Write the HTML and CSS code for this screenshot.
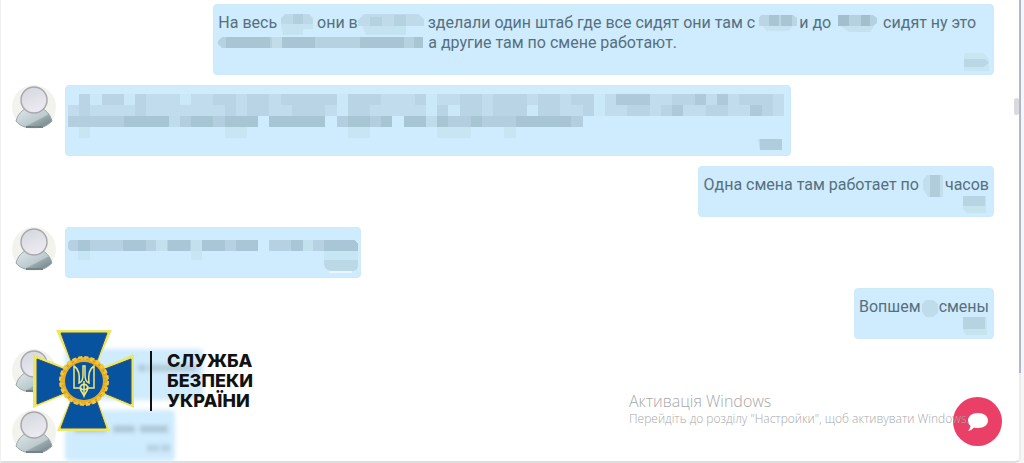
FILE: index.html
```
<!DOCTYPE html>
<html lang="uk">
<head>
    <meta charset="UTF-8">
    <meta name="viewport" content="width=device-width, initial-scale=1">
    <title>Чат</title>
    <link rel="stylesheet" href="styles.css">
</head>
<body>
<!-- shared drawings -->
<svg class="defs" aria-hidden="true">
    <defs>
        <linearGradient id="head" x1="0" y1="0" x2="0.4" y2="1">
            <stop offset="0" stop-color="#d3d6de"/>
            <stop offset="1" stop-color="#eceaf0"/>
        </linearGradient>
        <linearGradient id="body" x1="0" y1="0" x2="1" y2="1">
            <stop offset="0" stop-color="#dfe9ea"/>
            <stop offset="0.6" stop-color="#bccace"/>
            <stop offset="0.64" stop-color="#98a8ad"/>
            <stop offset="1" stop-color="#6f8086"/>
        </linearGradient>
        <symbol id="user" viewBox="0 0 44 44">
            <circle cx="22" cy="22" r="22" fill="#f3f3ee"/>
            <path d="M4 36C6 29 10 25 15 23H29C34 25 38 29 40 36C37 39 34 41 31 42H13C10 41 6 39 4 36Z" fill="url(#body)" stroke="#9aa6aa"/>
            <path d="M14 42H31" stroke="#74838a" stroke-width="2"/>
            <circle cx="22" cy="15" r="13" fill="url(#head)" stroke="#aaa8ae" stroke-width="1.5"/>
        </symbol>
    </defs>
</svg>

<main class="chat">
    <div class="messages">
        <div class="message message--out">
            <div class="bubble">
                <p>На весь <svg class="hidden-text" width="32" height="22" viewBox="0 0 32 22"><path fill="#bdd9e8" d="M4 1H28L32 5V11H0V5Z"/><path fill="#c5e2f1" d="M0 11H32V16H22V22H2Z"/><path fill="#b2cfde" d="M12 1H22V11H12Z"/></svg> они в<svg class="hidden-text" width="66" height="22" viewBox="0 0 66 22"><path fill="#bfdbe9" d="M6 1H60L66 6V13H0V7Z"/><path fill="#b5d2e1" d="M12 4H24V13H12ZM36 2H48V13H36Z"/><path fill="#c5e2f1" d="M4 13H48V22H8Z"/></svg> зделали один штаб где все сидят они там с<svg class="hidden-text" width="44" height="22" viewBox="0 0 44 22"><path fill="#bad5e4" d="M6 2H38L42 5V13H4V5Z"/><path fill="#a9c4d3" d="M14 2H24V13H14ZM26 2H37V13H26Z"/><path fill="#c7e3f2" d="M8 13H38L34 18H12Z"/></svg>и до <svg class="hidden-text" width="44" height="22" viewBox="0 0 44 22"><path fill="#b5d0df" d="M6 2H38L42 5V10L38 13H3V5Z"/><path fill="#a3bfce" d="M3 2H14V13H3ZM26 2H35V13H26Z"/><path fill="#c5e1f0" d="M6 13H39L35 19H14Z"/></svg> сидят ну это <svg class="hidden-text" width="206" height="16" viewBox="0 0 206 16"><path fill="#b6d1df" d="M4 1H205V12H4L0 8V5Z"/><path fill="#a9c4d2" d="M8 1H52V12H8ZM64 1H97V12H64ZM142 1H186V12H142ZM196 1H205V12H196Z"/><path fill="#c2dcea" d="M54 1H64V12H54Z"/></svg> а другие там по смене работают.</p>
                <div class="time"><svg width="26" height="18" viewBox="0 0 26 18"><path fill="#c8e5f2" d="M2 0H20L26 6V18H1V3Z"/><path fill="#b9d7e5" d="M1 6H22L26 10L20 14H1Z"/></svg></div>
            </div>
        </div>

        <div class="message">
            <svg class="avatar" role="img" aria-label="Користувач"><use href="#user"/></svg>
            <div class="bubble bubble--mosaic bubble--wide">
                <svg class="mosaic" width="716" height="44" viewBox="0 0 64 4" preserveAspectRatio="none" shape-rendering="crispEdges">
                    <path fill="#c1dded" d="M1 0H64V2H0V1H1Z"/>
                    <path fill="#cae8f7" d="M2 0H3V1H2ZM5 0H6V1H5ZM24 0H25V2H24ZM41 1H42V2H41ZM32 0H33V2H32ZM47 0H48V2H47ZM34 1H35V2H34ZM10 0H11V1H10Z"/>
                    <path fill="#b9d5e5" d="M1 0H2V2H1ZM3 0H5V1H3ZM6 0H7V2H6ZM13 0H15V1H13ZM14 1H15V2H14ZM16 0H18V2H16ZM19 0H24V1H19ZM20 1H23V2H20ZM25 0H28V1H25ZM25 1H27V2H25ZM31 0H32V1H31ZM33 1H34V2H33ZM35 0H37V2H35ZM38 0H41V2H38ZM42 0H44V2H42ZM45 0H46V1H45ZM46 0H47V2H46ZM50 1H52V2H50ZM54 0H56V1H54ZM53 1H54V2H53ZM57 1H59V2H57ZM60 0H63V1H60ZM62 1H63V2H62Z"/>
                    <path fill="#aecada" d="M49 0H52V1H49ZM56 0H57V1H56ZM58 0H59V1H58ZM54 1H55V2H54ZM61 1H62V2H61Z"/>
                    <path fill="#b3cfdf" d="M0 2H17V3H0ZM18 2H23V3H18ZM24 2H29V3H24ZM30 2H46V3H30Z"/>
                    <path fill="#a8c5d4" d="M5 2H9V3H5ZM11 2H13V3H11ZM14 2H17V3H14ZM18 2H23V3H18ZM25 2H27V3H25ZM28 2H29V3H28ZM30 2H32V3H30ZM33 2H34V3H33ZM36 2H37V3H36ZM40 2H45V3H40Z"/>
                    <path fill="#bfdceb" d="M9 2H10V3H9ZM32 2H33V3H32Z"/>
                    <path fill="#c8e5f4" d="M1 3H2V4H1ZM14 3H16V4H14ZM25 3H27V4H25ZM33 3H36V4H33ZM39 3H40V4H39Z"/>
                </svg>
                <div class="time"><svg width="26" height="18" viewBox="0 0 26 18"><path fill="#c0dceb" d="M0 5H22V16H2Z"/><path fill="#b0cddd" d="M2 5H24V16H2Z"/></svg></div>
            </div>
        </div>

        <div class="message message--out">
            <div class="bubble">
                <p>Одна смена там работает по <svg class="hidden-text" width="22" height="22" viewBox="0 0 22 22"><path fill="#c3dfee" d="M4 0H20V22H5L0 14V5Z"/><path fill="#b1cddc" d="M7 0H17V22H7Z"/></svg>часов</p>
                <div class="time"><svg width="26" height="18" viewBox="0 0 26 18"><path fill="#c7e3f0" d="M0 1H23V18H4L0 14Z"/><path fill="#b7d4e2" d="M0 1H22V11H0Z"/></svg></div>
            </div>
        </div>

        <div class="message">
            <svg class="avatar" role="img" aria-label="Користувач"><use href="#user"/></svg>
            <div class="bubble bubble--mosaic">
                <svg class="mosaic" width="290" height="24" viewBox="0 0 290 24" shape-rendering="crispEdges">
                    <path fill="#b6d2e2" d="M2 4H190V15H2L0 12V7ZM201 4H286L290 8V15H201Z"/>
                    <path fill="#a9c6d6" d="M10 4H22V15H10ZM55 4H78V15H55ZM100 4H122V15H100ZM134 4H157V15H134ZM168 4H190V15H168ZM223 4H235V15H223ZM256 4H286L290 8V15H256Z"/>
                    <path fill="#c3e0ef" d="M88 4H99V15H88ZM123 4H134V15H123ZM235 4H245V15H235Z"/>
                    <path fill="#c7e6f4" d="M10 15H22V24H10ZM123 15H134V24H123ZM256 15H290V24H256Z"/>
                </svg>
                <div class="time"><svg width="34" height="18" viewBox="0 0 34 18"><path fill="#bad8e5" d="M0 4H34V9Q34 15 28 15H8Q2 15 0 9Z"/><path fill="none" stroke="#e8f7fd" stroke-width="2" d="M5 16H28"/></svg></div>
            </div>
        </div>

        <div class="message message--out">
            <div class="bubble">
                <p>Вопшем<svg class="hidden-text" width="18" height="22" viewBox="0 0 18 22"><path fill="#bfdceb" d="M5 3H12L17 7V16L12 20H5L1 15V7Z"/></svg>смены</p>
                <div class="time"><svg width="26" height="18" viewBox="0 0 26 18"><path fill="#c6e3f0" d="M0 0H24V18H3L0 14Z"/><path fill="#b6d3e2" d="M0 0H22V12H0Z"/></svg></div>
            </div>
        </div>

        <div class="message">
            <svg class="avatar" role="img" aria-label="Користувач"><use href="#user"/></svg>
            <div class="bubble bubble--blurred">
                <svg class="smudge" width="128" height="32" viewBox="0 0 128 32"><path stroke="#b0ccdb" stroke-width="7" stroke-dasharray="8 3 50 2" d="M68 10H126"/></svg>
            </div>
        </div>

        <div class="message">
            <svg class="avatar" role="img" aria-label="Користувач"><use href="#user"/></svg>
            <div class="bubble bubble--blurred">
                <svg class="smudge" width="100" height="36" viewBox="0 0 100 36"><path stroke="#adc9d7" stroke-width="7" stroke-dasharray="32 7 22 5" d="M4 10H98"/><path stroke="#b6d2e0" stroke-width="7" stroke-dasharray="12 2" d="M77 29H103"/></svg>
            </div>
        </div>
    </div>
    <div class="scrollbar"></div>
</main>

<div class="logo">
    <svg class="logo__cross" width="104" height="104" viewBox="0 0 104 104" role="img" aria-label="Емблема СБУ">
        <path d="M24 1H80L62 42L102 25V79L62 62L78 102H25L42 62L1 79V25L42 42Z" fill="#ece763"/>
        <path d="M29 4H75L60 45L99 30V75L60 59L74 99H29L44 59L5 75V30L44 45Z" fill="#07539f" stroke="#32507a"/>
        <circle cx="52" cy="52" r="24" fill="#e5ac26"/>
        <circle cx="52" cy="52" r="23" fill="none" stroke="#f0c63a" stroke-width="4" stroke-dasharray="4 2"/>
        <circle cx="52" cy="52" r="22" fill="none" stroke="#c98a1a" stroke-width="1" stroke-dasharray="2 5"/>
        <circle cx="52" cy="52" r="19" fill="#07539f"/>
        <path d="M42 37V59H48C49 63 51 64 52 67C53 64 55 63 56 59H62V37C57 40 56 46 57 54C54 53 53 50 53 46V37H51V46C51 50 50 53 47 54C48 46 47 40 42 37Z" fill="none" stroke="#f0e77c" stroke-width="1.5"/>
        <path d="M48 58Q52 52 56 58Q52 64 48 58M52 52V65" fill="none" stroke="#f0e77c" stroke-width="1.5"/>
    </svg>
    <div class="logo__text">СЛУЖБА<br>БЕЗПЕКИ<br>УКРАЇНИ</div>
</div>

<button class="chat-button" type="button" aria-label="Написати">
    <svg width="22" height="20" viewBox="0 0 22 20"><path fill="#fff" d="M11 1C17 1 21 4 21 8.500S17 16 11 16Q8.500 16 7 15.500Q4 19 1 19Q3 17 3.500 14Q1 12 1 8.500C1 4 5 1 11 1Z"/></svg>
</button>

<div class="activation">
    <div class="activation__title">Активація Windows</div>
    <div class="activation__text">Перейдіть до розділу "Настройки", щоб активувати Windows.</div>
</div>
</body>
</html>
```
FILE: styles.css
```
* {
    box-sizing: border-box;
}

body {
    margin: 0;
    min-height: 100vh;
    position: relative;
    background: #f6f6f6;
    font-family: Roboto, "Liberation Sans", sans-serif;
    font-size: 16px;
    line-height: 20px;
    color: #56707f;
}

p {
    margin: 0;
}

svg {
    display: block;
}

.defs {
    position: absolute;
    width: 0;
    height: 0;
}

.chat {
    position: relative;
    display: flex;
    margin-right: 3px;
    background: #fff;
    border-left: 1px solid #f0f0f0;
    border-right: 2px solid #ececec;
    border-bottom: 2px solid #dedede;
    border-bottom-right-radius: 6px;
}

/* coloured part of the right edge */
.chat::after {
    content: "";
    position: absolute;
    top: 0;
    right: -2px;
    width: 2px;
    height: 81%;
    background: #b5b4cd;
}

.messages {
    flex: 1;
    display: flex;
    flex-direction: column;
    gap: 10px;
    padding: 4px 20px 0 11px;
}

.message {
    display: flex;
    align-items: flex-start;
    gap: 9px;
}

.message--out {
    justify-content: flex-end;
}

.avatar {
    flex: none;
    width: 44px;
    height: 44px;
}

.bubble {
    max-width: 79.5%;
    min-height: 51px;
    padding: 8px 4px 5px;
    background: #cfebfe;
    border: 1px solid #cdeaf7;
    border-radius: 4px;
}

.bubble--mosaic {
    max-width: none;
    padding-left: 2px;
    padding-right: 2px;
}

.bubble--wide {
    padding-right: 6px;
}

.bubble--blurred {
    filter: blur(2px);
}

.mosaic {
    margin-bottom: -4px;
}

.hidden-text {
    display: inline-block;
    vertical-align: middle;
    margin: -4px 0;
}

.time {
    display: flex;
    justify-content: flex-end;
    height: 16px;
}

.scrollbar {
    align-self: flex-start;
    width: 5px;
    height: 17px;
    margin-top: 98px;
    background: #d9d9df;
    border-radius: 3px;
}

.logo {
    position: absolute;
    left: 32px;
    bottom: 30px;
    display: flex;
    align-items: center;
    gap: 14px;
}

.logo__text {
    padding-left: 15px;
    border-left: 2px solid #111;
    font-family: Inter, sans-serif;
    font-size: 18px;
    font-weight: 800;
    color: #111;
}

.chat-button {
    position: absolute;
    right: 22px;
    bottom: 17px;
    display: flex;
    align-items: center;
    justify-content: center;
    width: 49px;
    height: 49px;
    padding: 0;
    border: 0;
    border-radius: 50%;
    background: #ea4068;
}

.activation {
    position: absolute;
    right: 59px;
    bottom: 36px;
    width: 336px;
    font-family: "Open Sans", sans-serif;
    font-weight: 300;
    color: #a8a8a8;
    white-space: nowrap;
    pointer-events: none;
}

.activation__title {
    font-size: 16px;
}

.activation__text {
    font-size: 12px;
    line-height: 16px;
}
```
